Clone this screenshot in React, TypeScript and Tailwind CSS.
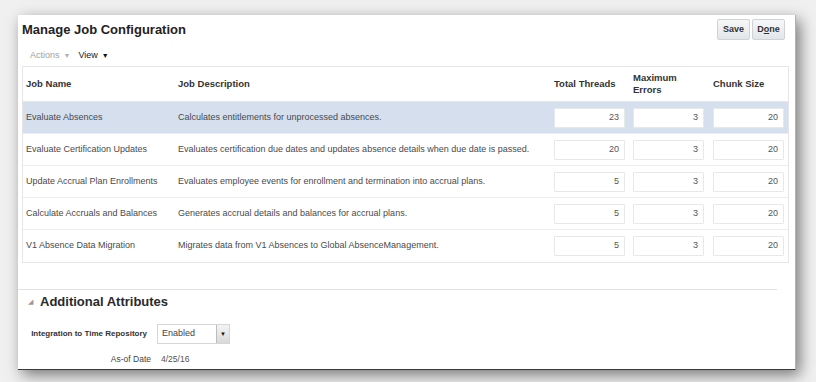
import React from "react";

type Job = {
  name: string;
  description: string;
  threads: number;
  errors: number;
  chunk: number;
  selected?: boolean;
};

const jobs: Job[] = [
  {
    name: "Evaluate Absences",
    description: "Calculates entitlements for unprocessed absences.",
    threads: 23,
    errors: 3,
    chunk: 20,
    selected: true,
  },
  {
    name: "Evaluate Certification Updates",
    description:
      "Evaluates certification due dates and updates absence details when due date is passed.",
    threads: 20,
    errors: 3,
    chunk: 20,
  },
  {
    name: "Update Accrual Plan Enrollments",
    description:
      "Evaluates employee events for enrollment and termination into accrual plans.",
    threads: 5,
    errors: 3,
    chunk: 20,
  },
  {
    name: "Calculate Accruals and Balances",
    description: "Generates accrual details and balances for accrual plans.",
    threads: 5,
    errors: 3,
    chunk: 20,
  },
  {
    name: "V1 Absence Data Migration",
    description: "Migrates data from V1 Absences to Global AbsenceManagement.",
    threads: 5,
    errors: 3,
    chunk: 20,
  },
];

function NumberBox({ value }: { value: number }) {
  return (
    <div className="w-[71px] h-[20px] bg-white border border-[#e6e8ea] rounded-[1px] flex items-center justify-end pr-[5px] text-[9px] text-[#555]">
      {value}
    </div>
  );
}

function ToolButton({ children }: { children: React.ReactNode }) {
  return (
    <div className="h-[21px] w-[33px] flex items-center justify-center rounded-[2px] border border-[#cfd3d7] bg-gradient-to-b from-[#f6f7f8] to-[#e3e6e9] text-[9px] font-bold text-[#333]">
      {children}
    </div>
  );
}

export default function App() {
  return (
    <div
      className="w-[816px] h-[382px] bg-[#f0f0f0] pt-[15px] pl-[18px] overflow-hidden"
      style={{ fontFamily: '"Liberation Sans", Arial, sans-serif' }}
    >
      <div className="w-[778px] h-[355px] bg-white border-r border-r-[#a6c66a] border-b border-b-[#3a3a3a] shadow-[4px_5px_14px_rgba(0,0,0,0.5)] flex flex-col">
        {/* Header */}
        <div className="flex justify-between items-start pl-[4px] pr-[10px] pt-[4px] h-[30px]">
          <h1 className="text-[13px] leading-[16px] font-bold text-[#222] mt-[3px]">
            Manage Job Configuration
          </h1>
          <div className="flex gap-[2px]">
            <ToolButton>Save</ToolButton>
            <ToolButton>
              D<span className="underline">o</span>ne
            </ToolButton>
          </div>
        </div>

        {/* Toolbar */}
        <div className="flex items-center pl-[12px] mt-[5px] h-[12px] text-[9px]">
          <span className="text-[#a0a0a0]">Actions</span>
          <span className="text-[#b0b0b0] text-[7px] ml-[4px]">▼</span>
          <span className="text-[#222] ml-[8px]">View</span>
          <span className="text-[#111] text-[7px] ml-[4px]">▼</span>
        </div>

        {/* Table */}
        <div className="ml-[4px] mt-[4px] w-[767px] border border-[#e6e6e6]">
          <div className="flex items-center h-[35px] text-[9.5px] font-bold text-[#333] border-b border-[#e6e6e6]">
            <div className="w-[155px] pl-[3px]">Job Name</div>
            <div className="w-[376px]">Job Description</div>
            <div className="w-[79px]">Total Threads</div>
            <div className="w-[80px] leading-[12px]">
              Maximum
              <br />
              Errors
            </div>
            <div className="w-[75px]">Chunk Size</div>
          </div>
          {jobs.map((job, i) => (
            <div
              key={job.name}
              className={`flex items-center h-[32px] text-[9px] text-[#4a4a4a] ${
                job.selected ? "bg-[#d5dfee]" : "bg-white"
              } ${i < jobs.length - 1 ? "border-b border-[#ededed]" : ""}`}
            >
              <div className="w-[155px] pl-[3px]">{job.name}</div>
              <div className="w-[376px]">{job.description}</div>
              <div className="w-[79px]">
                <NumberBox value={job.threads} />
              </div>
              <div className="w-[80px]">
                <NumberBox value={job.errors} />
              </div>
              <div className="w-[75px]">
                <NumberBox value={job.chunk} />
              </div>
            </div>
          ))}
        </div>

        {/* Additional attributes */}
        <div className="mt-[26px] mr-[18px] border-t border-[#e2e2e2]" />
        <div className="flex items-center pl-[10px] mt-[3px] h-[18px]">
          <span className="text-[#999] text-[7px] mr-[7px]">◢</span>
          <h2 className="text-[13px] font-bold text-[#2a2a2a]">
            Additional Attributes
          </h2>
        </div>

        <div className="grid grid-cols-[129px_1fr] gap-x-[10px] gap-y-[9px] mt-[13px] items-center">
          <div className="text-right text-[8px] font-bold text-[#333]">
            Integration to Time Repository
          </div>
          <div className="flex w-[73px] h-[20px] border border-[#d6d6d6] bg-white">
            <div className="flex-1 flex items-center pl-[4px] text-[9px] text-[#444]">
              Enabled
            </div>
            <div className="w-[13px] h-full border-l border-[#bdbdbd] bg-gradient-to-b from-[#f4f4f4] to-[#d9d9d9] flex items-center justify-center text-[6px] text-[#111]">
              ▼
            </div>
          </div>
          <div className="text-right text-[8.5px] text-[#444] mr-[-4px]">
            As-of Date
          </div>
          <div className="pl-[4px] text-[8.5px] text-[#555]">4/25/16</div>
        </div>
      </div>
    </div>
  );
}
